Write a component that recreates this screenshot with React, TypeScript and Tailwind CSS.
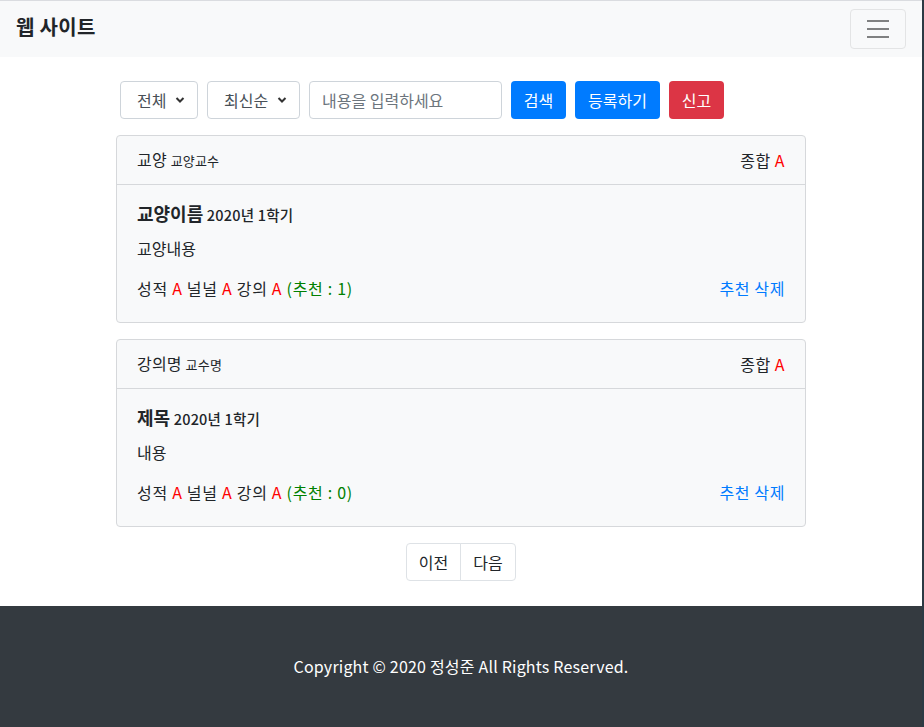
import React from "react";

const font = { fontFamily: '"Noto Sans CJK KR", "Noto Sans", sans-serif' };

type Review = {
  lecture: string;
  professor: string;
  title: string;
  term: string;
  content: string;
  likes: number;
};

const reviews: Review[] = [
  { lecture: "교양", professor: "교양교수", title: "교양이름", term: "2020년 1학기", content: "교양내용", likes: 1 },
  { lecture: "강의명", professor: "교수명", title: "제목", term: "2020년 1학기", content: "내용", likes: 0 },
];

function Chevron() {
  return (
    <svg
      className="pointer-events-none absolute right-[13px] top-1/2 -translate-y-1/2"
      width="10"
      height="8"
      viewBox="0 0 10 8"
      fill="none"
    >
      <path d="M1.5 2l3.5 3.5L8.5 2" stroke="#333" strokeWidth="2" />
    </svg>
  );
}

function SelectBox({ label, width }: { label: string; width: string }) {
  return (
    <div className={`relative h-[38px] ${width}`}>
      <select className="h-full w-full appearance-none rounded border border-[#ced4da] bg-white pl-[16px] text-[16px] text-[#495057] outline-none">
        <option>{label}</option>
      </select>
      <Chevron />
    </div>
  );
}

function ReviewCard({ r }: { r: Review }) {
  return (
    <div className="mb-4 rounded border border-[#d6d8db] bg-[#f8f9fa]">
      <div className="flex h-[49px] items-center justify-between border-b border-[#d6d8db] px-5 leading-6">
        <div className="text-[16px] tracking-[0.2px]">
          {r.lecture} <small className="text-[13px]">{r.professor}</small>
        </div>
        <div className="text-[16px] tracking-[0.5px]">
          종합 <span className="text-[#ff0000]">A</span>
        </div>
      </div>
      <div className="px-5 pb-[22px] pt-[17px]">
        <div className="mb-[12px] h-[22px] leading-[22px]">
          <span className="text-[18px] font-bold">{r.title}</span>{" "}
          <small className="text-[14.5px] font-medium tracking-[0.2px]">{r.term}</small>
        </div>
        <p className="mb-4 text-[16px] leading-6">{r.content}</p>
        <div className="flex items-center justify-between text-[16px] leading-6">
          <div className="tracking-[0.7px]">
            성적 <span className="text-[#ff0000]">A</span> 널널 <span className="text-[#ff0000]">A</span> 강의{" "}
            <span className="text-[#ff0000]">A</span>{" "}
            <span className="text-[#008000]">(추천 : {r.likes})</span>
          </div>
          <div className="tracking-[0.6px] text-[#007bff]">추천 삭제</div>
        </div>
      </div>
    </div>
  );
}

export default function App() {
  return (
    <div className="flex min-h-[727px] w-[924px] bg-[#2c3a44]" style={font}>
      <div className="flex w-[922px] flex-col bg-white text-[#212529]">
        <div className="h-px bg-[#dadce0]" />
        <nav className="flex h-[56px] items-center justify-between bg-[#f8f9fa] px-4">
          <span className="pb-1 text-[20px] font-semibold tracking-[0.3px]">웹 사이트</span>
          <button className="flex h-[40px] w-[56px] items-center justify-center rounded border border-[#e3e4e5]">
            <svg width="30" height="30" viewBox="0 0 30 30">
              <path d="M4 7h22M4 15h22M4 23h22" stroke="#7f8081" strokeWidth="2" />
            </svg>
          </button>
        </nav>

        <div className="mx-auto w-[690px] pt-6">
          <form className="mb-4 ml-1 flex items-center gap-[9px]">
            <SelectBox label="전체" width="w-[78px]" />
            <SelectBox label="최신순" width="w-[93px]" />
            <input
              className="h-[38px] w-[193px] rounded border border-[#ced4da] px-3 text-[16px] outline-none placeholder:text-[#6c757d]"
              placeholder="내용을 입력하세요"
            />
            <button type="button" className="h-[38px] w-[55px] rounded bg-[#007bff] text-[16px] text-white">
              검색
            </button>
            <button type="button" className="h-[38px] w-[85px] rounded bg-[#007bff] text-[16px] text-white">
              등록하기
            </button>
            <button type="button" className="h-[38px] w-[55px] rounded bg-[#dc3545] text-[16px] text-white">
              신고
            </button>
          </form>

          {reviews.map((r) => (
            <ReviewCard key={r.title} r={r} />
          ))}

          <div className="flex justify-center pb-[25px]">
            <div className="flex h-[38px] text-[16px]">
              <span className="flex w-[55px] items-center justify-center rounded-l border border-[#dee2e6]">이전</span>
              <span className="-ml-px flex w-[56px] items-center justify-center rounded-r border border-[#dee2e6]">다음</span>
            </div>
          </div>
        </div>

        <footer className="flex flex-1 items-start justify-center bg-[#343a40] pt-[48px] text-[16px] leading-6 tracking-[0.2px] text-white">
          Copyright © 2020 정성준 All Rights Reserved.
        </footer>
      </div>
    </div>
  );
}
